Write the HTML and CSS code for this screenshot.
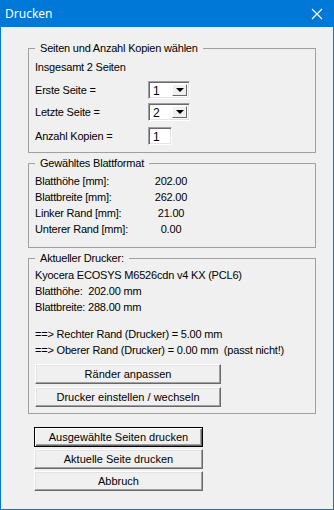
FILE: index.html
```html
<!doctype html>
<html lang="de">
<head>
  <meta charset="utf-8" />
  <title>Drucken</title>
  <link rel="stylesheet" href="styles.css">
</head>
<body>
  <div class="window">
    <div class="titlebar">
      <span class="title">Drucken</span>
      <svg class="close" width="12" height="12" viewBox="0 0 12 12"><path d="M1 1L11 11M11 1L1 11" stroke="#fff" stroke-width="1.2" fill="none"/></svg>
    </div>

    <div class="client">
      <fieldset class="group g-pages">
        <legend>Seiten und Anzahl Kopien wählen</legend>
        <div class="line">Insgesamt 2 Seiten</div>
        <div class="field f-first">
          <span class="lbl">Erste Seite =</span>
          <div class="combo"><span class="val">1</span><span class="drop"><i class="arrow"></i></span></div>
        </div>
        <div class="field f-last">
          <span class="lbl">Letzte Seite =</span>
          <div class="combo"><span class="val">2</span><span class="drop"><i class="arrow"></i></span></div>
        </div>
        <div class="field f-copies">
          <span class="lbl">Anzahl Kopien =</span>
          <div class="edit"><span class="val">1</span></div>
        </div>
      </fieldset>

      <fieldset class="group g-format">
        <legend>Gewähltes Blattformat</legend>
        <div class="grid">
          <span>Blatthöhe [mm]:</span><span class="num">202.00</span>
          <span>Blattbreite [mm]:</span><span class="num">262.00</span>
          <span>Linker Rand [mm]:</span><span class="num">21.00</span>
          <span>Unterer Rand [mm]:</span><span class="num">0.00</span>
        </div>
      </fieldset>

      <fieldset class="group g-printer">
        <legend>Aktueller Drucker:</legend>
        <div class="row">Kyocera ECOSYS M6526cdn v4 KX (PCL6)</div>
        <div class="row">Blatthöhe:  202.00 mm</div>
        <div class="row">Blattbreite: 288.00 mm</div>
        <div class="row gap">==&gt; Rechter Rand (Drucker) = 5.00 mm</div>
        <div class="row">==&gt; Oberer Rand (Drucker) = 0.00 mm  (passt nicht!)</div>
        <div class="btns wide">
          <button type="button">Ränder anpassen</button>
          <button type="button">Drucker einstellen / wechseln</button>
        </div>
      </fieldset>

      <div class="btns main">
        <button type="button" class="default">Ausgewählte Seiten drucken</button>
        <button type="button">Aktuelle Seite drucken</button>
        <button type="button">Abbruch</button>
      </div>
    </div>
  </div>
</body>
</html>
```

FILE: styles.css
```css
:root{--bg:#f0f0f0;--blue:#0078d7;--line:#a0a0a0;--dark:#696969}
*{box-sizing:border-box}
body{margin:0;background:#fff;font-family:"Liberation Sans",Arial,sans-serif;font-size:11px;letter-spacing:-0.2px;color:#000}
.window{width:334px;height:510px;background:var(--bg);border:1px solid var(--blue);border-top:0}
.titlebar{height:27px;background:var(--blue);display:flex;align-items:center;justify-content:space-between;padding:0 10px 0 4px}
.title{font-family:"Noto Sans","Open Sans",sans-serif;font-size:12px;letter-spacing:0;color:#fff;line-height:14px}
.close{display:block}
.client{padding:15px 0 0 27px}
.group{margin:0;width:288px;border:1px solid var(--line);padding:0 6px;min-width:0}
.group legend{padding:0 5px;line-height:13px;height:13px}
.group + .group{margin-top:4px}
.line{line-height:13px;height:13px}
.g-pages{padding-top:6px;padding-bottom:7px}
.field{display:flex;align-items:center;height:18px}
.field .lbl{width:113px}
.f-first{margin-top:7px}
.f-last{margin-top:4px}
.f-copies{margin-top:6px}
.combo,.edit{height:18px;background:#fff;border:1px solid;border-color:var(--line) #fff #fff var(--line);box-shadow:inset 1px 1px var(--dark),inset -1px -1px #e3e3e3;display:flex;align-items:stretch}
.combo{width:42px}
.edit{width:24px}
.val{flex:1;padding:2px 0 0 4px;font-size:12px;line-height:14px}
.drop{width:15px;margin:2px 2px 2px 0;background:var(--bg);border:1px solid;border-color:#fff var(--dark) var(--dark) #fff;display:flex;align-items:center;justify-content:center}
.arrow{width:0;height:0;border-left:4px solid transparent;border-right:4px solid transparent;border-top:4px solid #000}
.g-format{padding-top:3px;padding-bottom:10px}
.grid{display:grid;grid-template-columns:103px 66px;grid-auto-rows:16px;align-items:center}
.num{text-align:center}
.g-printer{padding-top:2px;padding-bottom:6px}
.row{height:16px;line-height:16px;white-space:pre}
.row.gap{margin-top:11px}
.btns{display:flex;flex-direction:column;gap:3px}
.btns.wide{margin-top:6px;width:186px}
.btns.main{margin:13px 0 0 6px;width:169px;gap:2px}
button{font:inherit;color:#000;height:20px;padding:0;background:var(--bg);border:1px solid;border-color:#fff var(--dark) var(--dark) #fff;box-shadow:inset -1px -1px var(--line),inset 1px 1px #e3e3e3;border-radius:0}
button.default{border:1px solid #000;box-shadow:inset 1px 1px #fff,inset -1px -1px var(--dark),inset -2px -2px var(--line)}
```
